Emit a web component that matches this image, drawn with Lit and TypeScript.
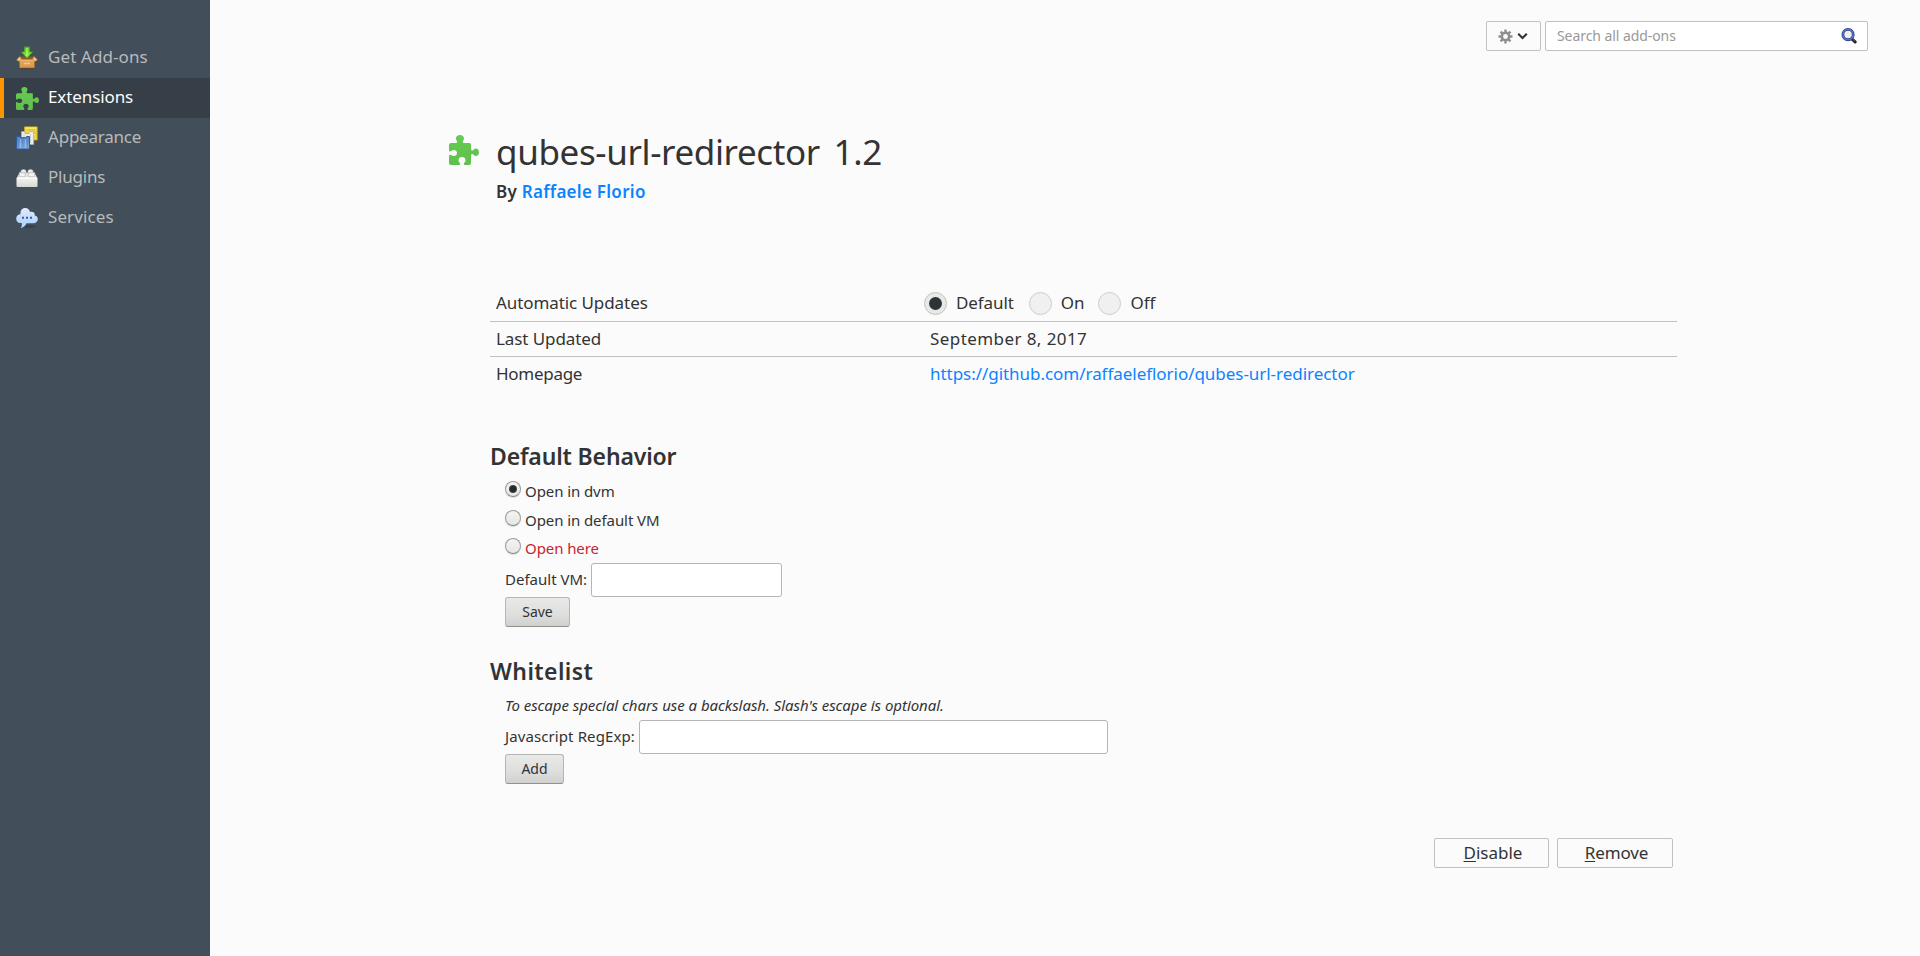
import { LitElement, html, css, svg } from "lit";
import { customElement, state } from "lit/decorators.js";
import { classMap } from "lit/directives/class-map.js";

const puzzle = (id: string) => svg`
  <defs><linearGradient id=${id} x1="0" y1="0" x2="0" y2="1"><stop offset="0" stop-color="#66cc52"/><stop offset="1" stop-color="#60bf4c"/></linearGradient></defs>
  <path fill="url(#${id})" d="M2 8H6.2C7.6 8 8.3 7.4 8.1 6.4C8 5.7 6.9 5 6.9 3.4C6.9 1.4 8.6 0 10.9 0S15 1.4 15 3.4C15 5 13.9 5.700 13.800 6.400C13.600 7.400 14.300 8 15.700 8H20.500Q22 8 22 9.500V13.800C22 15.200 22.800 15.800 23.700 15.500C24.500 15.200 24.900 13.400 26.700 13.400C28.700 13.400 30 15 30 17.200S28.700 21 26.700 21C24.900 21 24.500 19.200 23.700 19C22.800 18.700 22 19.300 22 20.700V28Q22 30 20 30H16.800C15.400 30 14.800 29.300 15 28.400C15.200 27.600 16.500 27 16.500 25.200C16.500 23.200 15 22 13 22S9.500 23.200 9.500 25.200C9.500 27 10.800 27.600 11 28.400C11.200 29.300 10.600 30 9.200 30H2Q0 30 0 28V21.500C0 20.100 .7 19.500 1.600 19.800C2.400 20 3 21 4.700 21C6.700 21 8 19.800 8 18S6.700 15 4.700 15C3 15 2.400 16.200 1.600 16.400C.7 16.700 0 16.100 0 14.700V10Q0 8 2 8Z"/>`;

const icons: Record<string, unknown> = {
  get: html`<svg class="icon" viewBox="0 0 22 24">
    <defs>
      <linearGradient id="bx" x1="0" y1="0" x2="0" y2="1"><stop offset="0" stop-color="#e2aa64"/><stop offset="1" stop-color="#d6954a"/></linearGradient>
      <linearGradient id="ar" x1="0" y1="0" x2="0" y2="1"><stop offset="0" stop-color="#58c81c"/><stop offset="1" stop-color="#8cf04a"/></linearGradient>
    </defs>
    <ellipse cx="11" cy="22.300" rx="8" ry="1" fill="#2c353d"/>
    <path fill="#8e5a22" d="M4 10.500H18V15H4Z"/>
    <path fill="url(#bx)" stroke="#a8682a" stroke-width=".7" d="M3.500 13.500H18.500V22H3.500Z"/>
    <path fill="#f4c98c" stroke="#b57631" stroke-width=".7" d="M3.800 10.500L.5 14L3.300 15.500L5.500 13ZM18.200 10.500L21.500 14L18.700 15.500L16.500 13Z"/>
    <path stroke="#f0bd7a" d="M4.500 14.200H17.500"/><path stroke="#f3c68c" stroke-width="1.500" d="M8 17.500H14"/>
    <path fill="url(#ar)" stroke="#4db314" stroke-width=".6" d="M8.500 .7L10 1.400L11 .5L12 1.400L13.500 .7V6H16.500L11 12L5.500 6H8.500Z"/>
    <path stroke="#b9fb87" d="M11 2V10"/>
  </svg>`,
  extensions: html`<svg class="icon puzzle" viewBox="0 0 30 30">${puzzle("pz1")}</svg>`,
  appearance: html`<svg class="icon" viewBox="0 0 22 24">
    <defs><linearGradient id="bl" x1="0" y1="0" x2="0" y2="1"><stop offset="0" stop-color="#4f82c0"/><stop offset="1" stop-color="#88b2e2"/></linearGradient></defs>
    <path fill="#f2d833" stroke="#cbab10" stroke-width=".8" d="M8.500 .9H21.200V14H8.500Z"/>
    <path stroke="#fff4a0" d="M9.500 2H20.500M11.500 5H18M16 8.500H19"/><path stroke="#c9a814" stroke-width=".7" d="M11 4H19M16 7.300H20"/>
    <path fill="#ececea" stroke="#a8a8a6" stroke-width=".8" d="M5.500 5.500H9V7.500H13V5.500H17.700V18.500H5.500Z"/>
    <path stroke="#c9c9c9" stroke-width=".8" d="M8 8V12M14.500 8V17"/>
    <path fill="url(#bl)" stroke="#2b5c9e" stroke-width="1" d="M.7 10.500H4L5 11.700H9.500L10.500 10.500H13.500V23H.7Z"/>
    <path stroke="#94bdea" stroke-width=".8" d="M4.500 13V22M9.500 13V22"/><path stroke="#4f82c0" stroke-width=".6" d="M2.500 13V22M7 13V22M11.700 13V22"/>
  </svg>`,
  plugins: html`<svg class="icon" viewBox="0 0 22 24">
    <defs><linearGradient id="br" x1="0" y1="0" x2="0" y2="1"><stop offset="0" stop-color="#f4f4f2"/><stop offset="1" stop-color="#d7d7d4"/></linearGradient></defs>
    <path fill="#dededc" d="M3.500 6.500H18.500L21.500 12.500H.5Z"/>
    <path fill="#f3f3f1" stroke="#bcbcba" stroke-width=".6" d="M5 4.500Q7.500 2.500 10 4.500V7H5ZM12 4.500Q14.500 2.500 17 4.500V7H12ZM3.500 6.800Q6 5 9 6.800V10.500H3.500ZM12.500 6.800Q15.500 5 18.500 6.800V10.500H12.500Z"/>
    <rect x=".5" y="11.500" width="21" height="9.500" rx="1" fill="url(#br)"/>
    <path stroke="#fff" d="M1.500 12H20.500"/>
  </svg>`,
  services: html`<svg class="icon" viewBox="0 0 22 24">
    <defs><linearGradient id="cl" x1="0" y1="0" x2="0" y2="1"><stop offset="0" stop-color="#e3e9ff"/><stop offset="1" stop-color="#a9cffa"/></linearGradient></defs>
    <ellipse cx="12" cy="20.500" rx="8" ry="1.500" fill="#36414b"/>
    <path fill="url(#cl)" d="M4.500 17C1.500 17 .2 14.900 .2 12.700C.2 10 2.200 8.300 4.500 8.300C4 4.500 6 2 9.200 2C12 2 13.600 3.700 14 6C17.500 5.300 19 7.200 18.800 9.400C20.800 9.800 21.800 11.200 21.800 13C21.800 15.500 20 17.300 17.500 17.300H10.500C9.500 20 7.500 21.500 4.500 22C5.800 20.500 6 19 5.700 17Z"/>
    <path fill="#2d5ea8" d="M6 10.800H8V12.800H6ZM10 10.800H12V12.800H10ZM14 10.800H16V12.800H14Z"/>
  </svg>`,
};

const nav = [
  ["get", "Get Add-ons"], ["extensions", "Extensions"], ["appearance", "Appearance"],
  ["plugins", "Plugins"], ["services", "Services"],
];

@customElement("app-root")
export class AppRoot extends LitElement {
  @state() selected = "extensions";
  @state() updates = "Default";
  @state() behavior = "Open in dvm";

  static styles = css`
    :host { display: flex; height: 956px; overflow: hidden; background: #fbfbfb; color: #333;
      font: 17px/24px "Noto Sans", "Open Sans", sans-serif; }
    * { box-sizing: border-box; }
    a { color: #0a84ff; text-decoration: none; }
    .sidebar { width: 210px; flex: none; background: #424f5a; padding-top: 38px; letter-spacing: -.1px; }
    .item { display: flex; align-items: center; height: 40px; padding-left: 16px; gap: 10px; color: #b8babb; cursor: default; }
    .item .name { padding-bottom: 3px; }
    .item.get { letter-spacing: .1px; }
    .item.services { letter-spacing: .1px; }
    .item.appearance, .item.plugins { letter-spacing: -.22px; }
    .item.on { background: #363f47; border-left: 4px solid #ff9500; padding-left: 12px; color: #fbfbfb; }
    .icon { width: 22px; height: 24px; flex: none; }
    .icon.puzzle { width: 23px; height: 23px; margin: 1px -1px 0 0; }
    .main { flex: 1; display: flex; flex-direction: column; }
    .top { display: flex; justify-content: flex-end; gap: 4px; padding: 21px 52px 0 0; }
    .menu { width: 55px; height: 30px; border: 1px solid #c1c1c1; border-radius: 2px; background: #fbfbfb;
      display: flex; align-items: center; padding: 0 0 0 11px; gap: 4px; }
    .search { width: 323px; height: 30px; border: 1px solid #c1c1c1; border-radius: 2px; background: #fff;
      display: flex; align-items: center; justify-content: space-between; padding: 0 10px 0 11px; font-size: 14px; color: #999; letter-spacing: -.07px; }
    .detail { width: 1228px; margin: 78px 0 0 239px; display: flex; align-items: flex-start; gap: 17px; }
    .detail .logo { width: 30px; height: 30px; margin-top: 6px; flex: none; }
    h1 { margin: 1px 0 0; font-size: 35px; font-weight: 400; line-height: 44px; letter-spacing: -.38px; word-spacing: 5px; }
    .by { margin-top: 6px; font-weight: 600; letter-spacing: .28px; }
    .body { width: 1187px; margin: 83px 0 0 280px; }
    .row { display: grid; grid-template-columns: 434px 1fr; height: 35px; align-items: center; padding: 0 0 1px 6px; letter-spacing: -.08px; }
    .row + .row { border-top: 1px solid #c1c1c1; }
    .row .home { letter-spacing: -.28px; }
    .row.first { height: 34px; padding-bottom: 0; }
    .row.first .label { padding-bottom: 3px; }
    .date { letter-spacing: .42px; }
    .link { letter-spacing: -.04px; }
    .choices { display: flex; margin-left: -6px; }
    .choice { display: flex; align-items: center; gap: 9px; margin-right: 15px; }
    .choice span { padding-bottom: 2px; }
    .choice .radio { width: 23px; height: 23px; border: 1.5px solid #cdcdcd; border-radius: 50%; background: #f0f0f0;
      display: grid; place-items: center; margin-top: -1px; }
    .choice .radio.on { background: #e8e8e8; border-color: #c3c3c3; }
    .choice .radio.on::after { content: ""; width: 13px; height: 13px; border-radius: 50%; background: #2e3436; }
    .choice.mid { margin-right: 14px; }
    h2 { margin: 0; font-size: 23px; line-height: 30px; font-weight: 600; letter-spacing: -.15px; }
    .section { margin-top: 50px; font-size: 15px; }
    .section.white { margin-top: 29px; }
    .white h2 { letter-spacing: .4px; }
    .fields { padding-left: 15px; }
    .list { padding-top: 6px; letter-spacing: -.08px; }
    .opt { display: flex; align-items: center; gap: 4px; height: 29px; }
    .opt span { padding-bottom: 2px; }
    .opt:last-child { height: 28px; padding-bottom: 1px; }
    .opt.danger { color: #c6262e; }
    .small { width: 16px; height: 16px; border-radius: 50%; border: 1px solid #9a9a96; border-bottom-color: #85857f;
      background: linear-gradient(#f4f4f3, #e6e6e4); box-shadow: 0 1px 1px #ddd; margin-bottom: 5px; display: grid; place-items: center; }
    .small.on::after { content: ""; width: 8px; height: 8px; border-radius: 50%; background: radial-gradient(#23292c 45%, #7b8083 100%); }
    .line { display: flex; align-items: center; height: 34px; }
    .line span { width: 86px; padding-bottom: 2px; }
    .line .regexp { width: 134px; letter-spacing: .1px; }
    .box { width: 191px; height: 34px; border: 1px solid #b5b5b3; border-radius: 3px; background: #fff; }
    .box.wide { width: 469px; }
    .btn { width: 65px; height: 30px; border: 1px solid #b5b5b2; border-bottom-color: #91918c; border-radius: 3px; padding: 0 0 1px;
      font: 14px/26px "Noto Sans", sans-serif; color: #2e3436; background: linear-gradient(#e9e9e7, #dededc 60%, #d0d0ce); display: block; }
    .btn.add { width: 59px; }
    .hint { font-style: italic; padding-top: 7px; height: 34px; line-height: 24px; letter-spacing: -.04px; }
    .actions { display: flex; justify-content: flex-end; gap: 8px; padding: 54px 4px 0 0; }
    .action { height: 30px; width: 115px; border: 1px solid #c1c1c1; border-radius: 2px; background: #fbfbfb; color: #333;
      font: 17px/26px "Noto Sans", sans-serif; padding: 0 0 1px 3px; }
    .action.remove { width: 116px; padding-left: 3px; letter-spacing: -.1px; }
    u { text-underline-offset: 2px; text-decoration-thickness: 1px; }
  `;

  render() {
    return html`
      <nav class="sidebar">
        ${nav.map(([id, name]) => html`
          <div class=${classMap({ item: true, [id]: true, on: this.selected === id })} @click=${() => (this.selected = id)}>
            ${icons[id]}<span class="name">${name}</span>
          </div>`)}
      </nav>
      <main class="main">
        <div class="top">
          <div class="menu">
            <svg width="15" height="15" viewBox="0 0 15 15">
              <g stroke="#8d9091" stroke-width="2.400"><path d="M7.500 .5V3.500M7.500 11.500V14.500M.5 7.500H3.500M11.500 7.500H14.500M2.550 2.550L4.600 4.600M10.400 10.400L12.450 12.450M2.550 12.450L4.600 10.400M10.400 4.600L12.450 2.550"/></g>
              <circle cx="7.500" cy="7.500" r="3.700" fill="none" stroke="#8d9091" stroke-width="2.600"/>
            </svg>
            <svg width="11" height="8" viewBox="0 0 11 8"><path d="M1.200 1.800L5.500 6L9.800 1.800" fill="none" stroke="#2e3436" stroke-width="2.100"/></svg>
          </div>
          <div class="search"><span>Search all add-ons</span>
            <svg width="16" height="16" viewBox="0 0 17 17">
              <path d="M11.500 11.500L15 14.800" stroke="#222" stroke-width="3.200" stroke-linecap="round"/>
              <path d="M13 12.500L14.500 13.800" stroke="#a08c74" stroke-width="1"/>
              <circle cx="7.500" cy="7" r="5.500" fill="#ededf0" stroke="#2c4592" stroke-width="3"/>
              <circle cx="7.500" cy="7" r="5.500" fill="none" stroke="#5c78c4" stroke-width="1.200"/>
            </svg>
          </div>
        </div>
        <div class="detail">
          <svg class="logo" viewBox="0 0 30 30">${puzzle("pz2")}</svg>
          <div>
            <h1>qubes-url-redirector 1.2</h1>
            <div class="by">By <a>Raffaele Florio</a></div>
          </div>
        </div>
        <div class="body">
          <div class="row first">
            <span class="label">Automatic Updates</span>
            <div class="choices">
              ${["Default", "On", "Off"].map((v) => html`
                <div class=${classMap({ choice: true, mid: v === "On" })} @click=${() => (this.updates = v)}>
                  <i class=${classMap({ radio: true, on: this.updates === v })}></i><span>${v}</span>
                </div>`)}
            </div>
          </div>
          <div class="row"><span>Last Updated</span><span class="date">September 8, 2017</span></div>
          <div class="row"><span class="home">Homepage</span><a class="link">https://github.com/raffaeleflorio/qubes-url-redirector</a></div>
          <section class="section">
            <h2>Default Behavior</h2>
            <div class="fields">
              <div class="list">
                ${["Open in dvm", "Open in default VM", "Open here"].map((v) => html`
                  <div class=${classMap({ opt: true, danger: v === "Open here" })} @click=${() => (this.behavior = v)}>
                    <i class=${classMap({ small: true, on: this.behavior === v })}></i><span>${v}</span>
                  </div>`)}
              </div>
              <div class="line"><span>Default VM:</span><input class="box" /></div>
              <button class="btn">Save</button>
            </div>
          </section>
          <section class="section white">
            <h2>Whitelist</h2>
            <div class="fields">
              <div class="hint">To escape special chars use a backslash. Slash's escape is optional.</div>
              <div class="line"><span class="regexp">Javascript RegExp:</span><input class="box wide" /></div>
              <button class="btn add">Add</button>
            </div>
          </section>
          <div class="actions">
            <button class="action"><u>D</u>isable</button>
            <button class="action remove"><u>R</u>emove</button>
          </div>
        </div>
      </main>`;
  }
}
